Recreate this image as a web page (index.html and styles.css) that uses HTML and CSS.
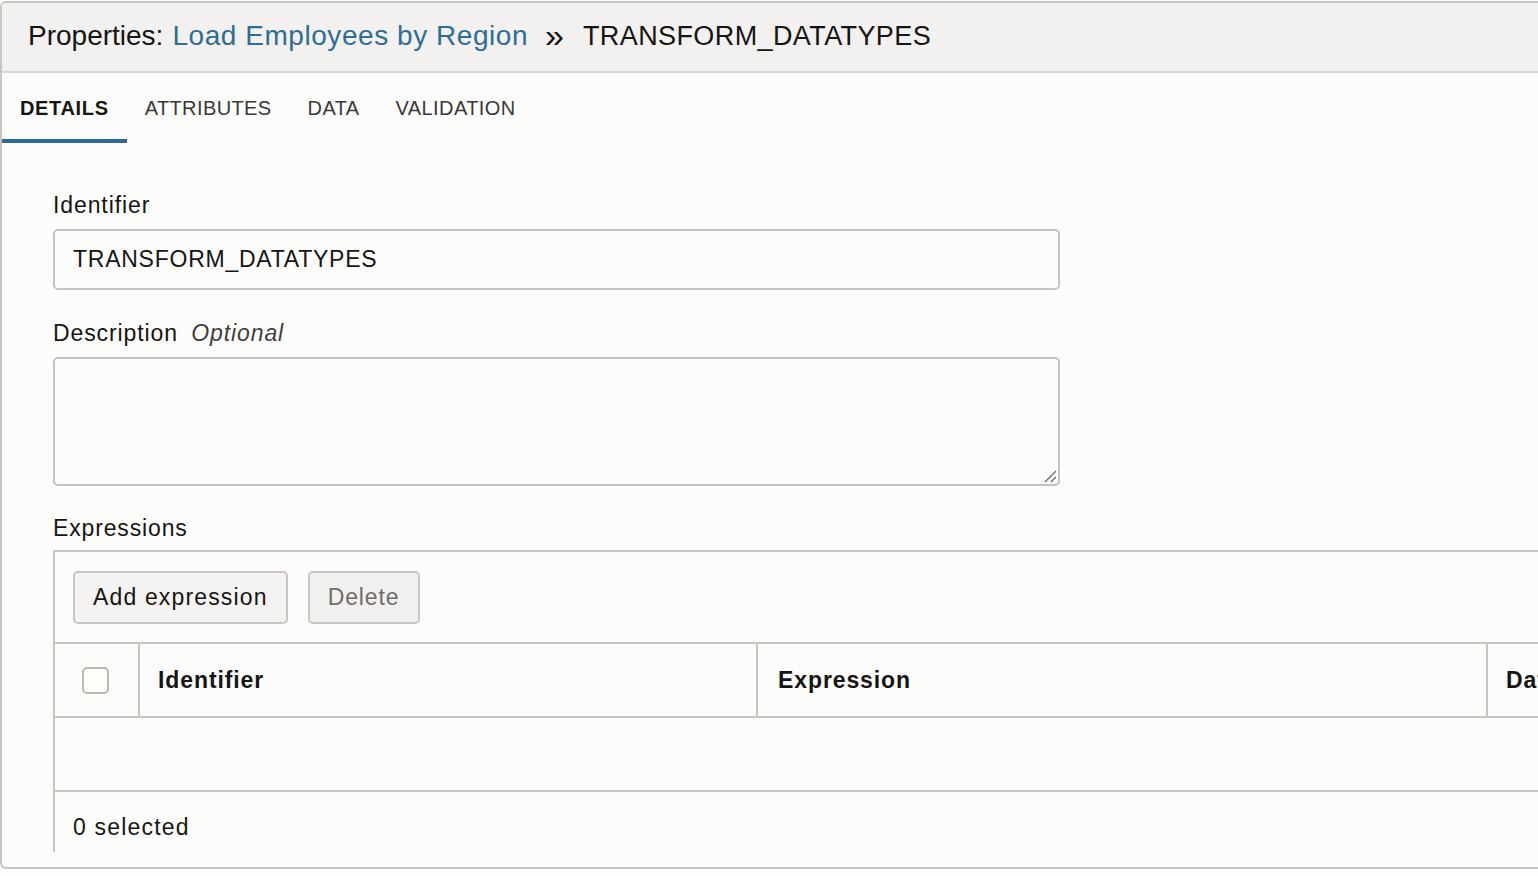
FILE: index.html
```html
<!DOCTYPE html>
<html lang="en">
<head>
<meta charset="utf-8">
<title>Properties</title>
<link rel="stylesheet" href="styles.css">
</head>
<body>
<div class="panel">
  <div class="header">
    <span class="title-label">Properties:</span>
    <a class="title-link">Load Employees by Region</a>
    <span class="sep">&raquo;</span>
    <span class="title-node">TRANSFORM_DATATYPES</span>
  </div>
  <div class="tabs">
    <div class="tab active">DETAILS</div>
    <div class="tab">ATTRIBUTES</div>
    <div class="tab">DATA</div>
    <div class="tab">VALIDATION</div>
  </div>
  <div class="content">
    <div class="field">
      <div class="label">Identifier</div>
      <div class="input">TRANSFORM_DATATYPES</div>
    </div>
    <div class="field">
      <div class="label">Description <span class="optional">Optional</span></div>
      <div class="textarea">
        <svg class="grip" width="14" height="14" viewBox="0 0 14 14"><path d="M2 13 L13 2 M8 13 L13 8" stroke="#6b6b6b" stroke-width="1.4" fill="none"/></svg>
      </div>
    </div>
    <div class="label label-expr">Expressions</div>
    <div class="table-box">
      <div class="toolbar">
        <button class="btn">Add expression</button>
        <button class="btn disabled">Delete</button>
      </div>
      <div class="thead">
        <div class="th th-check"><span class="checkbox"></span></div>
        <div class="th th-id">Identifier</div>
        <div class="th th-expr">Expression</div>
        <div class="th th-type">Data Type</div>
      </div>
      <div class="empty-row"></div>
      <div class="footer">0 selected</div>
    </div>
  </div>
</div>
</body>
</html>
```
FILE: styles.css
```css
html, body {
  margin: 0;
  padding: 0;
  overflow: hidden;
  background: #fdfdfc;
}
body {
  font-family: "Liberation Sans", Arial, sans-serif;
  color: #161513;
  height: 876px;
}
.panel {
  margin-top: 1px;
  width: 1600px;
  height: 868px;
  box-sizing: border-box;
  border: 2px solid #c9c5c0;
  border-right: none;
  border-radius: 6px 0 0 6px;
  background: #fcfcfb;
  overflow: hidden;
}
.header {
  height: 70px;
  box-sizing: border-box;
  background: #f2f1ef;
  border-bottom: 2px solid #d9d9da;
  display: flex;
  align-items: center;
  padding-left: 26px;
  padding-bottom: 2px;
  font-size: 28px;
}
.title-link {
  color: #2e6e94;
  margin-left: 9px;
  letter-spacing: 0.55px;
}
.sep {
  margin: 0 19px 0 17px;
  font-size: 34px;
  line-height: 28px;
  padding-bottom: 2px;
}
.title-node {
  font-size: 27px;
  letter-spacing: 0.4px;
}
.tabs {
  display: flex;
  height: 70px;
}
.tab {
  padding: 4px 18px 0;
  font-size: 20px;
  letter-spacing: 0.4px;
  color: #3a3937;
  display: flex;
  align-items: center;
  box-sizing: border-box;
  border-bottom: 4px solid transparent;
}
.tab.active {
  font-weight: bold;
  letter-spacing: 0.65px;
  color: #161513;
  border-bottom-color: #2c6b91;
  padding-top: 5px;
}
.content {
  padding: 48px 0 0 51px;
}
.label {
  font-size: 23px;
  letter-spacing: 0.9px;
  line-height: 28px;
  margin-bottom: 10px;
}
.label-expr {
  letter-spacing: 0.85px;
  margin-bottom: 8px;
}
.optional {
  font-style: italic;
  color: #3f3e3c;
  margin-left: 6px;
}
.field {
  margin-bottom: 29px;
}
.field + .field {
  margin-bottom: 28px;
}
.input {
  width: 1007px;
  height: 61px;
  box-sizing: border-box;
  border: 2px solid #c6c2bd;
  border-radius: 5px;
  background: #fcfcfb;
  font-size: 23px;
  letter-spacing: 0.75px;
  padding-left: 18px;
  display: flex;
  align-items: center;
}
.textarea {
  width: 1007px;
  height: 129px;
  box-sizing: border-box;
  border: 2px solid #c6c2bd;
  border-radius: 5px;
  background: #fcfcfb;
  position: relative;
}
.grip {
  position: absolute;
  right: 1px;
  bottom: 1px;
}
.table-box {
  width: 1600px;
  border-top: 2px solid #c9c5c0;
  border-left: 2px solid #c9c5c0;
  height: 300px;
}
.toolbar {
  display: flex;
  gap: 20px;
  padding: 19px 0 18px 18px;
  border-bottom: 2px solid #c9c5c0;
}
.btn {
  font-family: "Liberation Sans", Arial, sans-serif;
  font-size: 23px;
  letter-spacing: 1.15px;
  height: 53px;
  padding: 0 18px;
  background: #f4f3f2;
  border: 2px solid #c9c5c0;
  border-radius: 5px;
  color: #161513;
}
.btn.disabled {
  letter-spacing: 0.9px;
  color: #6f6c68;
  background: #f1f0ef;
}
.thead {
  display: flex;
  height: 74px;
  box-sizing: border-box;
  border-bottom: 2px solid #c9c5c0;
}
.th {
  display: flex;
  align-items: center;
  font-size: 23px;
  font-weight: bold;
  letter-spacing: 0.9px;
  padding-left: 18px;
  box-sizing: border-box;
  border-right: 2px solid #c9c5c0;
}
.th-check {
  width: 85px;
  padding-left: 27px;
}
.th-id { width: 618px; }
.th-expr { width: 730px; padding-left: 20px; }
.th-type { border-right: none; }
.checkbox {
  width: 27px;
  height: 27px;
  box-sizing: border-box;
  border: 2px solid #bdb8b2;
  border-radius: 5px;
  background: #fdfdfc;
}
.empty-row {
  height: 74px;
  box-sizing: border-box;
  border-bottom: 2px solid #c9c5c0;
}
.footer {
  font-size: 23px;
  letter-spacing: 1.2px;
  line-height: 28px;
  padding: 21px 0 0 18px;
}
```
